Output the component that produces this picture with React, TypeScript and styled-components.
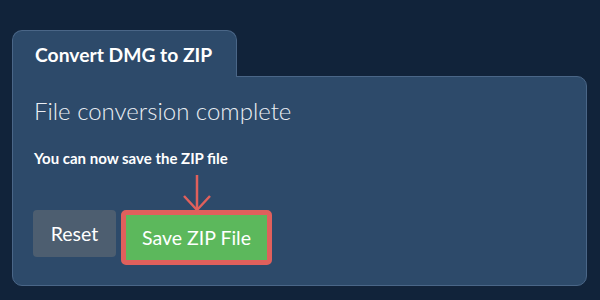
import React from "react";
import styled, { createGlobalStyle } from "styled-components";

const Global = createGlobalStyle`
  html, body { margin: 0; padding: 0; background: #11233a; }
  body { font-family: Lato, "Open Sans", sans-serif; }
`;

const Page = styled.div`
  width: 600px;
  height: 300px;
  box-sizing: border-box;
  padding: 30px 13px 0 12px;
  background: #11233a;
`;

const Tab = styled.div`
  position: relative;
  z-index: 1;
  width: 225px;
  height: 47px;
  box-sizing: border-box;
  padding: 12px 22px 0 22px;
  margin-bottom: -1px;
  background: #2d4a6a;
  border: 1px solid #4a6687;
  border-bottom: none;
  border-radius: 10px 10px 0 0;
  color: #ffffff;
  font-weight: 700;
  font-size: 19.3px;
  line-height: 1.2;
`;

const Panel = styled.div`
  box-sizing: border-box;
  height: 210px;
  padding: 20px 20px 20px 21px;
  background: #2d4a6a;
  border: 1px solid #4a6687;
  border-radius: 0 10px 10px 10px;
`;

const Heading = styled.h2`
  margin: 0;
  font-weight: 300;
  font-size: 24px;
  line-height: 1.2;
  color: #eaeef3;
`;

const Sub = styled.p`
  margin: 23px 0 0;
  font-weight: 700;
  font-size: 15px;
  line-height: 1.2;
  color: #ffffff;
`;

const Actions = styled.div`
  display: flex;
  align-items: flex-start;
  gap: 5px;
  margin-top: 43px;
  margin-left: -1px;
`;

const Button = styled.button<{ $variant: "reset" | "save" }>`
  font-family: Lato, "Open Sans", sans-serif;
  font-size: 19.5px;
  font-weight: 400;
  color: #ffffff;
  cursor: pointer;
  box-sizing: border-box;
  position: relative;
  ${(p) =>
    p.$variant === "reset"
      ? `
    width: 83px;
    height: 47px;
    background: #4d5e70;
    border: none;
    border-radius: 4px;
  `
      : `
    width: 151px;
    height: 55px;
    background: #5cb85c;
    border: 5px solid #e0605c;
    border-radius: 5px;
  `}
`;

const Arrow = styled.svg`
  position: absolute;
  left: 50%;
  bottom: 100%;
  margin-bottom: 3px;
  transform: translateX(-50%);
  overflow: visible;
`;

export default function App() {
  return (
    <>
      <Global />
      <Page>
        <Tab>Convert DMG to ZIP</Tab>
        <Panel>
          <Heading>File conversion complete</Heading>
          <Sub>You can now save the ZIP file</Sub>
          <Actions>
            <Button $variant="reset">Reset</Button>
            <Button $variant="save">
              <Arrow width="28" height="37" viewBox="0 0 28 37">
                <g stroke="#e0605c" strokeWidth="2.5" fill="none" strokeLinecap="butt">
                  <line x1="14" y1="0" x2="14" y2="35" />
                  <polyline points="1,21 14,35 27,21" />
                </g>
              </Arrow>
              Save ZIP File
            </Button>
          </Actions>
        </Panel>
      </Page>
    </>
  );
}
